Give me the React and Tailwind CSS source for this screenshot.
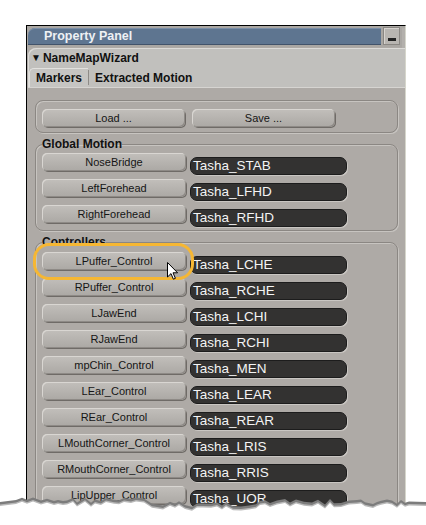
import React from 'react';

const globalRows = [
  ['NoseBridge', 'Tasha_STAB'],
  ['LeftForehead', 'Tasha_LFHD'],
  ['RightForehead', 'Tasha_RFHD'],
];

const controllerRows = [
  ['LPuffer_Control', 'Tasha_LCHE'],
  ['RPuffer_Control', 'Tasha_RCHE'],
  ['LJawEnd', 'Tasha_LCHI'],
  ['RJawEnd', 'Tasha_RCHI'],
  ['mpChin_Control', 'Tasha_MEN'],
  ['LEar_Control', 'Tasha_LEAR'],
  ['REar_Control', 'Tasha_REAR'],
  ['LMouthCorner_Control', 'Tasha_LRIS'],
  ['RMouthCorner_Control', 'Tasha_RRIS'],
  ['LipUpper_Control', 'Tasha_UOR'],
];

// jagged torn edge along the bottom
let seed = 7;
const rnd = () => {
  seed = (seed * 9301 + 49297) % 233280;
  return seed / 233280;
};
const tornPts = [];
for (let x = 16; x <= 412; x += 4 + Math.floor(rnd() * 5)) {
  const base = x < 150 ? 8 : x < 260 ? 12 : 10;
  tornPts.push([x, base + (rnd() - 0.5) * 6]);
}
const tornPath = (dy) =>
  'M0 40 L0 ' + (10 + dy) + ' ' +
  tornPts.map(([x, y]) => `L${x} ${(y + dy).toFixed(1)}`).join(' ') +
  ` L426 ${10 + dy} L426 40 Z`;

function PanelButton({ label, w = 'w-[144px]' }) {
  return (
    <div
      className={`${w} flex h-[18px] shrink-0 items-center justify-center rounded-[5px] bg-gradient-to-b from-[#c2bfbb] to-[#aba8a4] text-[11px] leading-none text-[#151515] shadow-[inset_1px_1px_0_#d9d6d2,inset_-1px_-1px_0_#8e8a86,1px_1px_0_#6f6b67]`}
    >
      {label}
    </div>
  );
}

function Field({ value }) {
  return (
    <div className="ml-[4px] mt-[4px] flex h-[18px] w-[157px] items-center rounded-[7px] border border-[#1c1c1c] bg-[#333231] pl-[2px] text-[13.5px] leading-none text-[#f4f4f4] shadow-[1px_1px_0_#c9c6c2]">
      {value}
    </div>
  );
}

function Group({ title, rows, className = '' }) {
  return (
    <fieldset
      className={`rounded-[8px] border border-[#8b8783] px-[6px] shadow-[inset_1px_1px_0_#c7c4c0,1px_1px_0_#c7c4c0] ${className}`}
    >
      <legend className="px-0 text-[12px] font-bold leading-[13px] text-[#111]">{title}</legend>
      <div className="flex flex-col gap-[4px]">
        {rows.map(([a, b]) => (
          <div key={a} className="flex items-start">
            <PanelButton label={a} />
            <Field value={b} />
          </div>
        ))}
      </div>
    </fieldset>
  );
}

export default function App() {
  return (
    <div className="relative h-[525px] w-[426px] overflow-hidden bg-white font-['Liberation_Sans',Arial,sans-serif]">
      <div className="ml-[26px] mt-[25px] h-[500px] w-[380px] border-l border-t border-black border-r border-r-[#d6d6cc] bg-[#aeaaa6]">
        {/* title strip */}
        <div className="flex h-[21px] items-start gap-[2px] bg-[#aaa7a3] pl-[1px] pt-[2px]">
          <div className="h-[17px] flex-1 rounded-tl-[7px] border-b border-[#42536a] bg-[#5e7590] pl-[16px] text-[12.5px] font-bold leading-[16px] text-[#eef1f4] shadow-[inset_0_1px_0_#7b8fa8]">
            Property Panel
          </div>
          <div className="-mt-[1px] flex h-[18px] w-[17px] items-end justify-center border border-[#8a8783] bg-[#b8b5b1] pb-[3px] shadow-[inset_1px_1px_0_#d6d3cf]">
            <div className="h-[3px] w-[8px] bg-[#222]" />
          </div>
          <div className="h-[20px] w-[3px] bg-[#b3b0ac]" />
        </div>

        {/* property header */}
        <div className="ml-[1px] mt-[1px] rounded-tl-[8px] border-b border-[#d6d4d1] bg-[#c1c0bd] shadow-[inset_1px_1px_0_#dcdbd8]">
          <div className="flex h-[19px] items-center pl-[3px] text-[12px] font-bold text-[#111]">
            <span className="mr-[2px] text-[10px]">▼</span>
            NameMapWizard
          </div>
          <div className="flex h-[20px] items-end text-[12px] font-bold text-[#111]">
            <div className="ml-[1px] flex h-[19px] items-center rounded-tl-[5px] border-l border-t border-[#e2e1de] bg-[#c6c5c2] pl-[6px] pr-[6px]">
              Markers
            </div>
            <div className="h-[15px] w-px self-center bg-[#8e8b87]" />
            <div className="flex h-[19px] items-center pl-[6px]">Extracted Motion</div>
          </div>
        </div>

        {/* content */}
        <div className="pl-[8px] pr-[7px]">
          <div className="mt-[12px] flex h-[33px] gap-[7px] rounded-[8px] border border-[#8b8783] pl-[6px] pt-[8px] shadow-[inset_1px_1px_0_#c7c4c0,1px_1px_0_#c7c4c0]">
            <PanelButton label="Load ..." w="w-[143px]" />
            <PanelButton label="Save ..." w="w-[143px]" />
          </div>

          <Group title="Global Motion" rows={globalRows} className="mt-[5px] pb-[3px] pt-[2px]" />
          <Group title="Controllers" rows={controllerRows} className="mt-[5px] pb-[7px] pt-[3px]" />
        </div>
      </div>

      {/* highlight ring around the first controller */}
      <div className="absolute left-[33px] top-[243px] h-[37px] w-[161px] rounded-[16px] border-[3px] border-[#f6b733]" />

      {/* mouse pointer */}
      <svg className="absolute left-[167px] top-[262px]" width="12" height="19" viewBox="0 0 12 19">
        <path
          d="M0.5 0.5 L0.5 15 L4 11.6 L6.4 17.2 L8.4 16.3 L6 10.8 L10.6 10.8 Z"
          fill="#fff"
          stroke="#000"
          strokeWidth="1"
          strokeLinejoin="round"
        />
      </svg>

      {/* torn paper edge */}
      <svg className="absolute left-0 top-[492px]" width="426" height="40" viewBox="0 0 426 40">
        <path d={tornPath(0)} fill="#7c7c7c" />
        <path d={tornPath(2.5)} fill="#b9b9b9" />
        <path d={tornPath(4)} fill="#fff" />
      </svg>
    </div>
  );
}
